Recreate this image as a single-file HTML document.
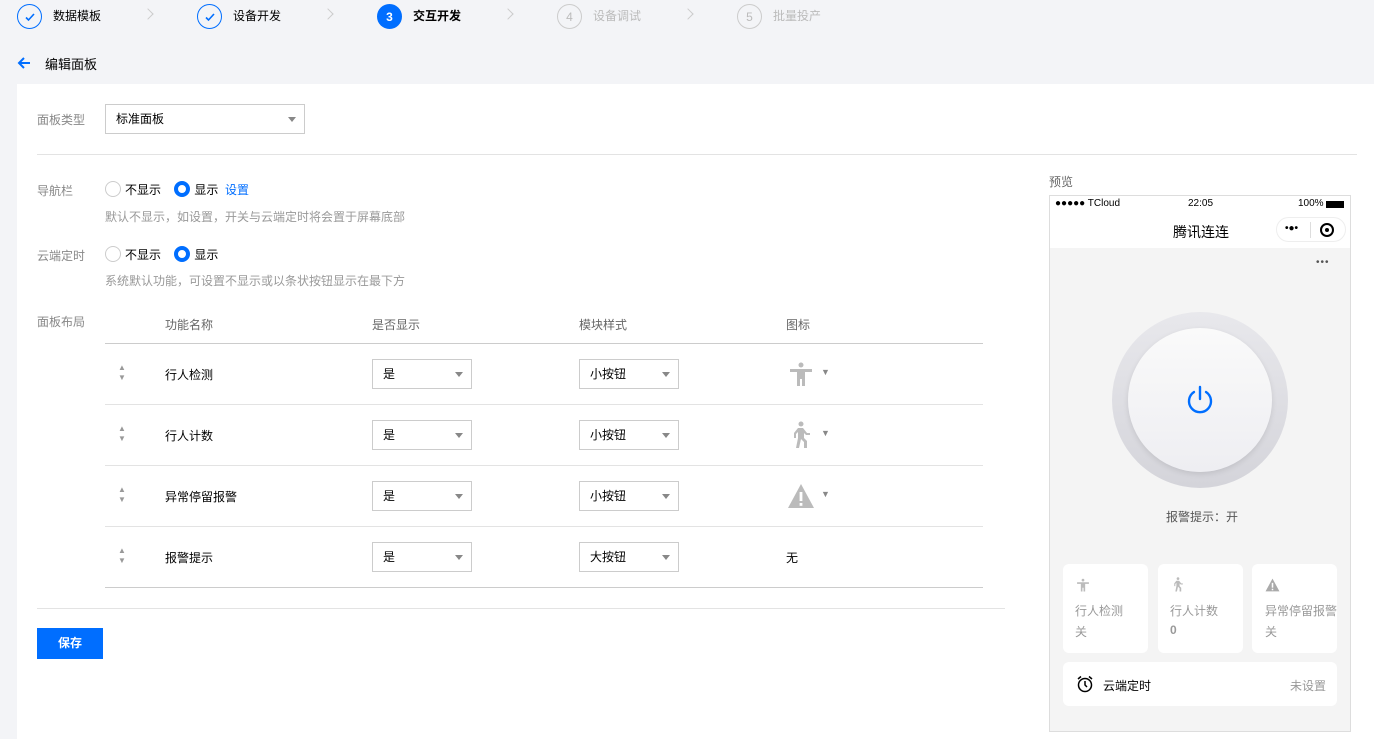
<!DOCTYPE html>
<html><head><meta charset="utf-8"><style>
*{box-sizing:border-box;margin:0;padding:0}
body{width:1374px;height:739px;overflow:hidden;background:#f3f4f7;font-family:"Liberation Sans","Noto Sans CJK SC",sans-serif;font-size:12px;color:#000;position:relative}
.a{position:absolute}
.circ{position:absolute;width:25px;height:25px;border-radius:50%;border:1px solid #006eff;display:flex;align-items:center;justify-content:center;font-size:12px}
.st{position:absolute;top:8px;font-size:12px;line-height:16px}
.chev{position:absolute;top:10px;width:8px;height:8px;border-right:1px solid #ccc;border-top:1px solid #ccc;transform:rotate(45deg)}
.sel{position:absolute;border:1px solid #ccc;background:#fff;height:30px;padding-left:10px;line-height:28px;font-size:12px}
.sel:after{content:"";position:absolute;right:8px;top:12px;border-left:4px solid transparent;border-right:4px solid transparent;border-top:5px solid #888}
.lbl{position:absolute;color:#888;font-size:12px}
.radio{display:inline-block;width:16px;height:16px;border-radius:50%;border:1px solid #ccc;vertical-align:-3px;margin-right:4px;background:#fff}
.radio.on{border:4px solid #006eff}
.hline{position:absolute;height:1px;background:#e3e3e3}
.card{position:absolute;background:#fff;border-radius:6px}
.ud{position:absolute;left:118px;color:#999;font-size:8px;line-height:10px}
.dd{position:absolute;left:821px;color:#888;font-size:9px}
</style></head><body>
<div class="circ" style="left:17px;top:4px"><svg width="12" height="12" viewBox="0 0 12 12"><path d="M2 6.5l2.5 2.5L10 3" fill="none" stroke="#006eff" stroke-width="1.6"/></svg></div>
<div class="st" style="left:53px">数据模板</div>
<div class="chev" style="left:144px"></div>
<div class="circ" style="left:197px;top:4px"><svg width="12" height="12" viewBox="0 0 12 12"><path d="M2 6.5l2.5 2.5L10 3" fill="none" stroke="#006eff" stroke-width="1.6"/></svg></div>
<div class="st" style="left:233px">设备开发</div>
<div class="chev" style="left:324px"></div>
<div class="circ" style="left:377px;top:4px;background:#006eff;color:#fff;font-weight:bold">3</div>
<div class="st" style="left:413px;font-weight:bold">交互开发</div>
<div class="chev" style="left:504px"></div>
<div class="circ" style="left:557px;top:4px;border-color:#ccc;color:#bbb">4</div>
<div class="st" style="left:593px;color:#bbb">设备调试</div>
<div class="chev" style="left:684px"></div>
<div class="circ" style="left:737px;top:4px;border-color:#ccc;color:#bbb">5</div>
<div class="st" style="left:773px;color:#bbb">批量投产</div>

<svg class="a" style="left:16px;top:55px" width="16" height="16" viewBox="0 0 16 16"><path d="M14 8H3M8 3L3 8l5 5" fill="none" stroke="#006eff" stroke-width="2"/></svg>
<div class="a" style="left:45px;top:54px;font-size:13px">编辑面板</div>

<div class="a" style="left:17px;top:84px;width:1357px;height:655px;background:#fff"></div>
<div class="lbl" style="left:37px;top:111px">面板类型</div>
<div class="sel" style="left:105px;top:104px;width:200px">标准面板</div>
<div class="hline" style="left:37px;top:154px;width:1320px"></div>

<div class="lbl" style="left:37px;top:182px">导航栏</div>
<div class="a" style="left:105px;top:181px"><span class="radio"></span>不显示 &nbsp;&nbsp;&nbsp;<span class="radio on"></span>显示 &nbsp;<span style="color:#006eff">设置</span></div>
<div class="lbl" style="left:105px;top:208px;color:#999">默认不显示，如设置，开关与云端定时将会置于屏幕底部</div>
<div class="lbl" style="left:37px;top:247px">云端定时</div>
<div class="a" style="left:105px;top:246px"><span class="radio"></span>不显示 &nbsp;&nbsp;&nbsp;<span class="radio on"></span>显示</div>
<div class="lbl" style="left:105px;top:272px;color:#999">系统默认功能，可设置不显示或以条状按钮显示在最下方</div>

<div class="lbl" style="left:37px;top:313px">面板布局</div>
<div class="lbl" style="left:165px;top:316px;color:#666">功能名称</div>
<div class="lbl" style="left:372px;top:316px;color:#666">是否显示</div>
<div class="lbl" style="left:579px;top:316px;color:#666">模块样式</div>
<div class="lbl" style="left:786px;top:316px;color:#666">图标</div>
<div class="hline" style="left:105px;top:343px;width:878px;background:#ccc"></div>

<div class="ud" style="top:363px">▲<br>▼</div>
<div class="a" style="left:165px;top:366px">行人检测</div>
<div class="sel" style="left:372px;top:359px;width:100px">是</div>
<div class="sel" style="left:579px;top:359px;width:100px">小按钮</div>
<svg class="a" style="left:788px;top:362px" width="26" height="24" viewBox="0 0 26 24"><circle cx="13" cy="3" r="2.5" fill="#bbb"/><path d="M2 7h22v3h-7v14h-3v-7h-2v7H9V10H2z" fill="#bbb"/></svg>
<div class="dd" style="top:367px">▼</div>
<div class="hline" style="left:105px;top:404px;width:878px"></div>

<div class="ud" style="top:424px">▲<br>▼</div>
<div class="a" style="left:165px;top:427px">行人计数</div>
<div class="sel" style="left:372px;top:420px;width:100px">是</div>
<div class="sel" style="left:579px;top:420px;width:100px">小按钮</div>
<svg class="a" style="left:788px;top:421px" width="26" height="28" viewBox="0 0 26 28"><circle cx="13" cy="3" r="2.5" fill="#bbb"/><path d="M10 7h5l4 5h3v2h-4l-2-2v5l3 3v7h-3v-6l-3-3-2 9H8l2-10V11l-2 2v4H6v-5z" fill="#bbb"/></svg>
<div class="dd" style="top:428px">▼</div>
<div class="hline" style="left:105px;top:465px;width:878px"></div>

<div class="ud" style="top:485px">▲<br>▼</div>
<div class="a" style="left:165px;top:488px">异常停留报警</div>
<div class="sel" style="left:372px;top:481px;width:100px">是</div>
<div class="sel" style="left:579px;top:481px;width:100px">小按钮</div>
<svg class="a" style="left:787px;top:483px" width="28" height="26" viewBox="0 0 28 26"><path d="M14 1L27 25H1z" fill="#bbb"/><rect x="12.6" y="9" width="2.8" height="9" fill="#fff"/><rect x="12.6" y="20" width="2.8" height="2.8" fill="#fff"/></svg>
<div class="dd" style="top:489px">▼</div>
<div class="hline" style="left:105px;top:526px;width:878px"></div>

<div class="ud" style="top:546px">▲<br>▼</div>
<div class="a" style="left:165px;top:549px">报警提示</div>
<div class="sel" style="left:372px;top:542px;width:100px">是</div>
<div class="sel" style="left:579px;top:542px;width:100px">大按钮</div>
<div class="a" style="left:786px;top:549px">无</div>
<div class="hline" style="left:105px;top:587px;width:878px;background:#ccc"></div>

<div class="hline" style="left:37px;top:608px;width:968px"></div>
<div class="a" style="left:37px;top:628px;width:66px;height:31px;background:#006eff;color:#fff;font-weight:bold;text-align:center;line-height:31px">保存</div>

<div class="lbl" style="left:1049px;top:173px;color:#666">预览</div>
<div class="a" style="left:1049px;top:195px;width:302px;height:537px;border:1px solid #ddd;background:#f4f4f4"></div>
<div class="a" style="left:1050px;top:196px;width:300px;height:52px;background:#fff"></div>
<div class="a" style="left:1055px;top:198px;font-size:10px">●●●●● TCloud</div>
<div class="a" style="left:1188px;top:198px;font-size:10px">22:05</div>
<div class="a" style="left:1298px;top:198px;font-size:10px">100%</div>
<div class="a" style="left:1326px;top:201px;width:18px;height:7px;background:#000"></div>
<div class="a" style="left:1173px;top:222px;font-size:14px">腾讯连连</div>
<div class="a" style="left:1276px;top:217px;width:70px;height:25px;border:1px solid #eee;border-radius:13px;background:#fff"></div>
<div class="a" style="left:1285px;top:223px;font-size:10px;font-weight:bold;line-height:12px">•●•</div>
<div class="a" style="left:1310px;top:222px;width:1px;height:16px;background:#ddd"></div>
<div class="a" style="left:1320px;top:223px;width:14px;height:14px;border:2px solid #000;border-radius:50%"></div>
<div class="a" style="left:1325px;top:228px;width:4px;height:4px;background:#000;border-radius:50%"></div>
<div class="a" style="left:1316px;top:257px;font-size:10px;color:#555;letter-spacing:1px">•••</div>
<div class="a" style="left:1112px;top:312px;width:176px;height:176px;border-radius:50%;background:linear-gradient(#e8e8ec,#d4d4da)"></div>
<div class="a" style="left:1128px;top:328px;width:144px;height:144px;border-radius:50%;background:linear-gradient(#fafafa,#eeeef2);box-shadow:0 2px 6px rgba(0,0,0,.1)"></div>
<svg class="a" style="left:1184px;top:384px" width="32" height="32" viewBox="0 0 32 32"><path d="M10 8a11 11 0 1 0 12 0" fill="none" stroke="#006eff" stroke-width="2.4" stroke-linecap="round"/><path d="M16 3v12" stroke="#006eff" stroke-width="2.4" stroke-linecap="round"/></svg>
<div class="a" style="left:1166px;top:508px;color:#555">报警提示：开</div>

<div class="card" style="left:1063px;top:564px;width:85px;height:89px"></div>
<div class="card" style="left:1158px;top:564px;width:85px;height:89px"></div>
<div class="card" style="left:1252px;top:564px;width:85px;height:89px"></div>
<svg class="a" style="left:1076px;top:578px" width="14" height="14" viewBox="0 0 26 24"><circle cx="13" cy="3" r="2.5" fill="#bbb"/><path d="M2 7h22v3h-7v14h-3v-7h-2v7H9V10H2z" fill="#bbb"/></svg>
<svg class="a" style="left:1171px;top:577px" width="14" height="15" viewBox="0 0 26 28"><circle cx="13" cy="3" r="2.5" fill="#bbb"/><path d="M10 7h5l4 5h3v2h-4l-2-2v5l3 3v7h-3v-6l-3-3-2 9H8l2-10V11l-2 2v4H6v-5z" fill="#bbb"/></svg>
<svg class="a" style="left:1265px;top:578px" width="15" height="14" viewBox="0 0 28 26"><path d="M14 1L27 25H1z" fill="#aaa"/><rect x="12.6" y="9" width="2.8" height="9" fill="#fff"/><rect x="12.6" y="20" width="2.8" height="2.8" fill="#fff"/></svg>
<div class="a" style="left:1075px;top:602px;color:#999">行人检测</div>
<div class="a" style="left:1075px;top:623px;color:#999">关</div>
<div class="a" style="left:1170px;top:602px;color:#999">行人计数</div>
<div class="a" style="left:1170px;top:623px;color:#999;font-weight:bold">0</div>
<div class="a" style="left:1265px;top:602px;color:#999">异常停留报警</div>
<div class="a" style="left:1265px;top:623px;color:#999">关</div>
<div class="card" style="left:1063px;top:662px;width:274px;height:44px"></div>
<svg class="a" style="left:1076px;top:675px" width="18" height="18" viewBox="0 0 18 18"><circle cx="9" cy="10" r="6.5" fill="none" stroke="#000" stroke-width="1.5"/><path d="M9 6v4l2 2M2 4l3-2.5M16 4l-3-2.5" fill="none" stroke="#000" stroke-width="1.5"/></svg>
<div class="a" style="left:1103px;top:677px">云端定时</div>
<div class="a" style="left:1290px;top:677px;color:#999">未设置</div>
</body></html>
